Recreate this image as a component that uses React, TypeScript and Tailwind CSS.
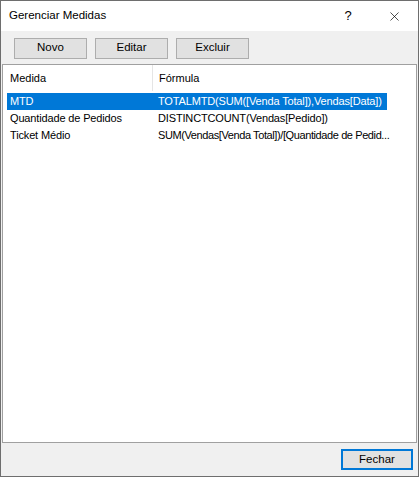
import { X } from "lucide-react";

const rows = [
  { name: "MTD", formula: "TOTALMTD(SUM([Venda Total]),Vendas[Data])", selected: true, tight: false },
  { name: "Quantidade de Pedidos", formula: "DISTINCTCOUNT(Vendas[Pedido])", selected: false, tight: false },
  { name: "Ticket Médio", formula: "SUM(Vendas[Venda Total])/[Quantidade de Pedid...", selected: false, tight: true },
];

function ToolButton({ label }: { label: string }) {
  return (
    <button className="h-[21px] w-[73px] border border-[#adadad] bg-[#e1e1e1] text-[11.5px] text-black leading-none">
      {label}
    </button>
  );
}

export default function App() {
  return (
    <div
      className="w-[419px] h-[477px] flex flex-col border border-[#6e6e6e] bg-[#f0f0f0] text-black overflow-hidden"
      style={{ fontFamily: '"Liberation Sans", Arial, sans-serif' }}
    >
      {/* title bar */}
      <div className="h-[30px] shrink-0 bg-white flex items-center pl-[8px]">
        <span className="text-[11.5px] flex-1">Gerenciar Medidas</span>
        <span className="text-[13px] w-[14px] mr-[32px] text-center">?</span>
        <X className="w-[15px] h-[15px] mr-[16px]" strokeWidth={1.1} />
      </div>

      {/* toolbar */}
      <div className="h-[33px] shrink-0 flex items-center gap-[8px] pl-[13px] pt-[1px]">
        <ToolButton label="Novo" />
        <ToolButton label="Editar" />
        <ToolButton label="Excluir" />
      </div>

      {/* list view */}
      <div className="flex-1 mx-[1px] border border-[#a0a0a0] bg-white flex flex-col">
        <div className="h-[26px] flex text-[11px] items-center">
          <div className="w-[150px] shrink-0 pl-[7px] h-full flex items-center border-r border-[#e5e5e5]">Medida</div>
          <div className="pl-[6px]">Fórmula</div>
        </div>
        <div className="pt-[2px] pl-[4px]">
          {rows.map((r) => (
            <div
              key={r.name}
              className={`h-[17px] w-[380px] flex items-center text-[11px] tracking-[-0.15px] whitespace-nowrap ${
                r.selected ? "bg-[#0078d7] text-white" : ""
              }`}
            >
              <div className="w-[146px] shrink-0 pl-[3px]">{r.name}</div>
              <div className={`pl-[5px] ${r.tight ? "tracking-[-0.4px]" : ""}`}>{r.formula}</div>
            </div>
          ))}
        </div>
      </div>

      {/* footer */}
      <div className="h-[33px] shrink-0 flex items-center justify-end pr-[5px]">
        <button className="h-[21px] w-[72px] border-2 border-[#0078d7] bg-[#e1e1e1] text-[11.5px] leading-none">
          Fechar
        </button>
      </div>
    </div>
  );
}
